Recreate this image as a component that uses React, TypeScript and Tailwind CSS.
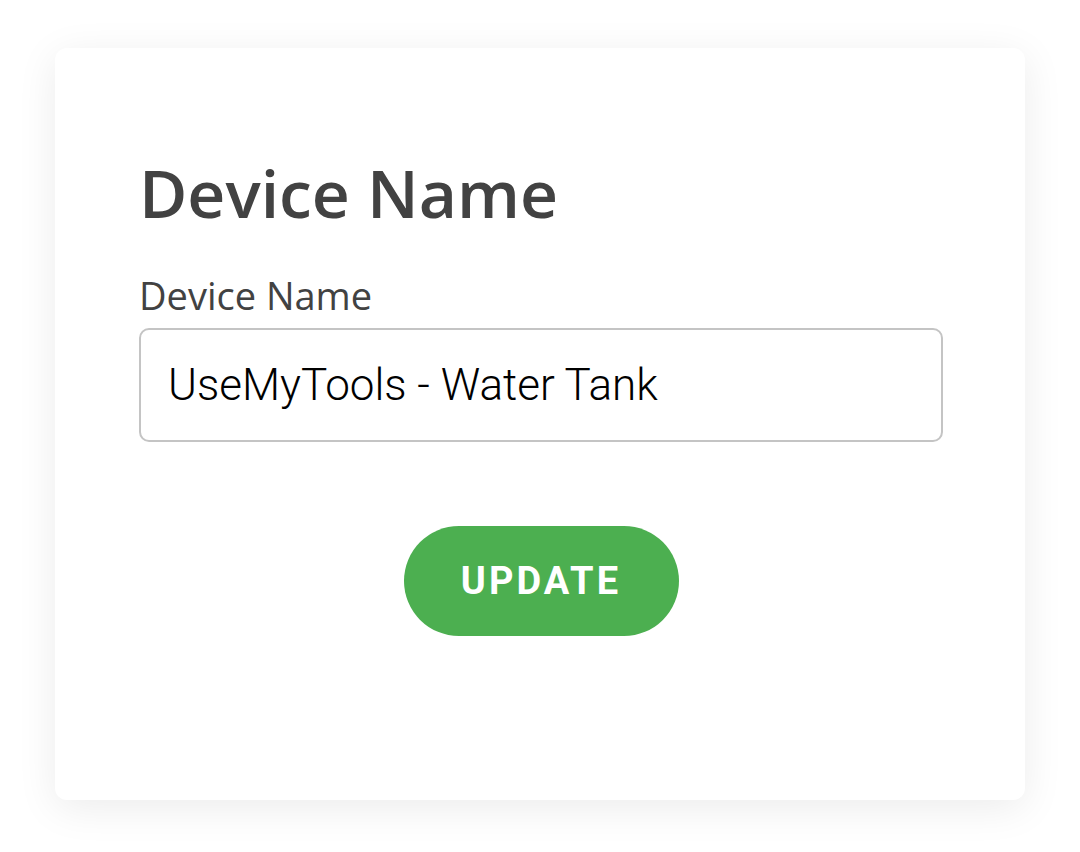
export default function App() {
  return (
    <div className="min-h-[852px] w-[1080px] bg-white pt-[48px] pl-[55px] font-['Open_Sans',sans-serif]">
      <div className="w-[970px] h-[752px] rounded-[12px] bg-white shadow-[0_8px_40px_rgba(0,0,0,0.08)] pl-[84px] pr-[82px] pt-[111px]">
        <h1 className="text-[66px] leading-none font-semibold text-[#424242]">Device Name</h1>
        <label className="block mt-[51px] text-[38px] leading-none text-[#424242]">Device Name</label>
        <div className="mt-[14px] h-[114px] rounded-[10px] border-2 border-[#c4c4c4] flex items-center px-[27px]">
          <span className="font-['Roboto',sans-serif] font-light text-[44px] text-black">UseMyTools - Water Tank</span>
        </div>
        <div className="flex justify-center mt-[84px]">
          <button className="w-[275px] h-[110px] rounded-full bg-[#4caf50] text-white font-['Roboto',sans-serif] font-bold text-[38px] tracking-[0.08em]">
            UPDATE
          </button>
        </div>
      </div>
    </div>
  )
}
